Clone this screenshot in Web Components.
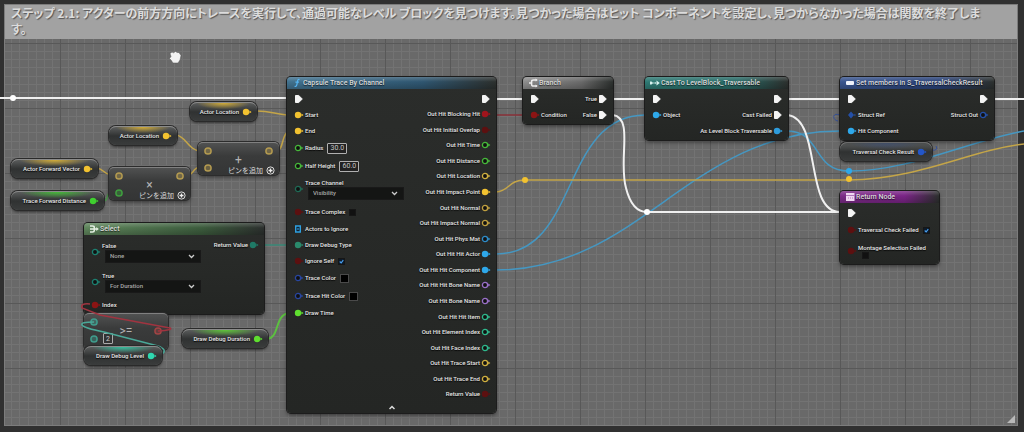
<!DOCTYPE html>
<html lang="ja">
<head>
<meta charset="utf-8">
<title>Traversal Blueprint</title>
<style>
  body { margin: 0; background: #2d2d2d; }
</style>
</head>
<body>
<graph-canvas>
  <comment-box>ステップ 2.1: アクターの前方方向にトレースを実行して、通過可能なレベル ブロックを見つけます。見つかった場合はヒット コンポーネントを設定し、見つからなかった場合は関数を終了します。</comment-box>
  <graph-wires></graph-wires>

  <var-node style="left:190px;top:102px;width:67px" label="Actor Location" color="#f2c230"></var-node>
  <var-node style="left:109px;top:126px;width:68px" label="Actor Location" color="#f2c230"></var-node>
  <var-node style="left:11px;top:159px;width:87px" label="Actor Forward Vector" color="#f2c230"></var-node>
  <var-node style="left:11px;top:191px;width:93px" label="Trace Forward Distance" color="#3fd02f"></var-node>

  <op-node style="left:198px;top:142px;width:81px;height:33px" sign="+" ins="#b39a50,#b39a50" out="#b39a50" addable></op-node>
  <op-node style="left:109px;top:167px;width:81px;height:33px" sign="×" ins="#b39a50,#3f9e3f" out="#b39a50" addable></op-node>

  <bp-node style="left:84px;top:223px;width:180px" heading="Select" icon="select" tint="#5f855c" tint2="#3c5c3d">
    <bp-pin slot="in" label="False" kind="ring" color="#1c7f70" control="select" value="None" roomy></bp-pin>
    <bp-pin slot="in" label="True" kind="ring" color="#1c7f70" control="select" value="For Duration" roomy></bp-pin>
    <bp-pin slot="in" label="Index" kind="dot" color="#8c1414"></bp-pin>
    <bp-pin slot="out" label="Return Value" kind="dot" color="#1f7a66"></bp-pin>
  </bp-node>
  <op-node style="left:84px;top:313px;width:84px;height:37px" sign="&gt;=" ins="#3f9c8c,#3f9c8c" out="#a04444" field="2"></op-node>
  <graph-wires layer="front"></graph-wires>
  <var-node style="left:84px;top:346px;width:78px" label="Draw Debug Level" color="#2fd8b0"></var-node>
  <var-node style="left:182px;top:329px;width:86px" label="Draw Debug Duration" color="#5fe02f"></var-node>

  <bp-node style="left:287px;top:77px;width:209px" heading="Capsule Trace By Channel" icon="func" tint="#42728f" tint2="#2f5670" collapsible>
    <bp-pin slot="in" kind="exec" color="#f4f4f4"></bp-pin>
    <bp-pin slot="in" label="Start" kind="dot" color="#f2c230"></bp-pin>
    <bp-pin slot="in" label="End" kind="dot" color="#f2c230"></bp-pin>
    <bp-pin slot="in" label="Radius" kind="ring" color="#46b83a" control="text" value="30.0"></bp-pin>
    <bp-pin slot="in" label="Half Height" kind="ring" color="#46b83a" control="text" value="60.0"></bp-pin>
    <bp-pin slot="in" label="Trace Channel" kind="ring" color="#1f6a55" control="select" value="Visibility"></bp-pin>
    <bp-pin slot="in" label="Trace Complex" kind="dot" color="#5c1010" control="check" tall></bp-pin>
    <bp-pin slot="in" label="Actors to Ignore" kind="array" color="#2ea0e0"></bp-pin>
    <bp-pin slot="in" label="Draw Debug Type" kind="dot" color="#2a8a6c"></bp-pin>
    <bp-pin slot="in" label="Ignore Self" kind="dot" color="#5c1010" control="check" value="on"></bp-pin>
    <bp-pin slot="in" label="Trace Color" kind="ring" color="#2846a0" control="color"></bp-pin>
    <bp-pin slot="in" label="Trace Hit Color" kind="ring" color="#2846a0" control="color"></bp-pin>
    <bp-pin slot="in" label="Draw Time" kind="dot" color="#5fe02f"></bp-pin>

    <bp-pin slot="out" kind="exec" color="#f4f4f4"></bp-pin>
    <bp-pin slot="out" label="Out Hit Blocking Hit" kind="dot" color="#a0141c"></bp-pin>
    <bp-pin slot="out" label="Out Hit Initial Overlap" kind="dot" color="#5c1010"></bp-pin>
    <bp-pin slot="out" label="Out Hit Time" kind="ring" color="#46b83a"></bp-pin>
    <bp-pin slot="out" label="Out Hit Distance" kind="ring" color="#46b83a"></bp-pin>
    <bp-pin slot="out" label="Out Hit Location" kind="ring" color="#d0b040"></bp-pin>
    <bp-pin slot="out" label="Out Hit Impact Point" kind="dot" color="#f2c230"></bp-pin>
    <bp-pin slot="out" label="Out Hit Normal" kind="ring" color="#c0a040"></bp-pin>
    <bp-pin slot="out" label="Out Hit Impact Normal" kind="ring" color="#c0a040"></bp-pin>
    <bp-pin slot="out" label="Out Hit Phys Mat" kind="ring" color="#2e8cc8"></bp-pin>
    <bp-pin slot="out" label="Out Hit Hit Actor" kind="dot" color="#2ea8ea"></bp-pin>
    <bp-pin slot="out" label="Out Hit Hit Component" kind="dot" color="#2ea8ea"></bp-pin>
    <bp-pin slot="out" label="Out Hit Hit Bone Name" kind="ring" color="#9a70c8"></bp-pin>
    <bp-pin slot="out" label="Out Hit Bone Name" kind="ring" color="#9a70c8"></bp-pin>
    <bp-pin slot="out" label="Out Hit Hit Item" kind="ring" color="#2fb88c"></bp-pin>
    <bp-pin slot="out" label="Out Hit Element Index" kind="ring" color="#2fb88c"></bp-pin>
    <bp-pin slot="out" label="Out Hit Face Index" kind="ring" color="#2fb88c"></bp-pin>
    <bp-pin slot="out" label="Out Hit Trace Start" kind="ring" color="#d0b040"></bp-pin>
    <bp-pin slot="out" label="Out Hit Trace End" kind="ring" color="#d0b040"></bp-pin>
    <bp-pin slot="out" label="Return Value" kind="dot" color="#5c1010"></bp-pin>
  </bp-node>

  <bp-node style="left:523px;top:77px;width:90px" heading="Branch" icon="branch" tint="#8e8e8e" tint2="#6a6a6a">
    <bp-pin slot="in" kind="exec" color="#f4f4f4"></bp-pin>
    <bp-pin slot="in" label="Condition" kind="dot" color="#8c1414"></bp-pin>
    <bp-pin slot="out" label="True" kind="exec" color="#f4f4f4"></bp-pin>
    <bp-pin slot="out" label="False" kind="exec" color="#f4f4f4"></bp-pin>
  </bp-node>

  <bp-node style="left:645px;top:77px;width:143px" heading="Cast To LevelBlock_Traversable" icon="cast" tint="#2f7a74" tint2="#286a66">
    <bp-pin slot="in" kind="exec" color="#f4f4f4"></bp-pin>
    <bp-pin slot="in" label="Object" kind="dot" color="#2ea8ea"></bp-pin>
    <bp-pin slot="out" kind="exec" color="#f4f4f4"></bp-pin>
    <bp-pin slot="out" label="Cast Failed" kind="exec" color="#f4f4f4"></bp-pin>
    <bp-pin slot="out" label="As Level Block Traversable" kind="dot" color="#2e9cdc"></bp-pin>
  </bp-node>

  <var-node style="left:840px;top:142px;width:92px" label="Traversal Check Result" color="#2456c8" plain></var-node>
  <bp-node style="left:840px;top:77px;width:154px" heading="Set members in S_TraversalCheckResult" icon="struct" tint="#3a568f" tint2="#2a4278">
    <bp-pin slot="in" kind="exec" color="#f4f4f4"></bp-pin>
    <bp-pin slot="in" label="Struct Ref" kind="diamond" color="#2450a8"></bp-pin>
    <bp-pin slot="in" label="Hit Component" kind="dot" color="#2ea8ea"></bp-pin>
    <bp-pin slot="out" kind="exec" color="#f4f4f4"></bp-pin>
    <bp-pin slot="out" label="Struct Out" kind="ring" color="#2450a8"></bp-pin>
  </bp-node>

  <bp-node style="left:840px;top:191px;width:99px" heading="Return Node" icon="return" tint="#7c2c88" tint2="#7a2486">
    <bp-pin slot="in" kind="exec" color="#f4f4f4"></bp-pin>
    <bp-pin slot="in" label="Traversal Check Failed" kind="dot" color="#5c1010" control="check" value="on" tall></bp-pin>
    <bp-pin slot="in" label="Montage Selection Failed" kind="dot" color="#5c1010" control="check" stacked></bp-pin>
  </bp-node>
  <hand-cursor style="left:168px;top:50px"></hand-cursor>
</graph-canvas>

<script>
const attach = (el, html) => { el.attachShadow({ mode: 'open' }).innerHTML = html; };

/* Glyph of one pin: exec arrow, filled or hollow dot, array grid, struct diamond. */
function pinGlyph(kind, c) {
  const shapes = {
    exec: `<path d="M1.5 1.5h3.2l3.6 3.5-3.6 3.5H1.5z" fill="${c}" stroke="${c}" stroke-linejoin="round"/>`,
    dot: `<circle cx="4" cy="5" r="3.2" fill="${c}"/><path d="M7.4 3.4 9.6 5 7.4 6.6z" fill="${c}"/>`,
    ring: `<circle cx="4" cy="5" r="2.6" fill="#111" stroke="${c}" stroke-width="1.3"/><path d="M7.2 3.4 9.4 5 7.2 6.6z" fill="${c}"/>`,
    array: `<path d="M1.700 2h4.600v6H1.700z" fill="#123" stroke="${c}" stroke-width="1.400"/><path d="M3.300 4.200h1.400v1.600H3.300z" fill="${c}"/>`,
    diamond: `<path d="M4 1.6 7 5 4 8.4 1 5z" fill="${c}"/><path d="M7.4 3.8 9 5 7.4 6.2z" fill="${c}"/>`
  };
  return `<svg width="10" height="10" viewBox="0 0 10 10" aria-hidden="true">${shapes[kind]}</svg>`;
}

const HEAD_ICONS = {
  func: '<path d="M7.5 1.6C5.6 1 5.6 2.6 5.2 5S4.600 8.800 2.600 8.300M3.400 4.200h3.500" fill="none" stroke="#55b4f0" stroke-width="1.200"/>',
  branch: '<path d="M1 5h2.500M8.500 2H5.500Q3.600 2 3.600 3.600v2.800Q3.600 8 5.500 8h3" fill="none" stroke="#eee" stroke-width="1.500"/><path d="M7.600.6 9.800 2 7.600 3.400zM7.600 6.600 9.800 8 7.600 9.400z" fill="#eee"/>',
  select: '<path d="M1 2h2.500q1.800 0 1.800 1.500v3Q5.300 8 3.500 8H1M1 5h7" fill="none" stroke="#e4efe2" stroke-width="1.600"/><path d="M7.300 3 9.800 5 7.300 7z" fill="#e4efe2"/>',
  cast: '<path d="M0 3.500h1.500L3.200 5 1.500 6.500H0zM6.500 2.600 9.800 5 6.500 7.400z" fill="#d8f2ef"/><path d="M3.500 5h3" stroke="#d8f2ef" stroke-width="1.500" stroke-dasharray="1 .6"/>',
  struct: '<rect x="1" y="3" width="8" height="4" rx="1" fill="#eef2fa"/>',
  return: '<rect x="1" y="1" width="8.500" height="8" fill="#f0d8f2"/><path d="M1 3.500h8.500M3 6h1M5 6h1M7 6h1" stroke="#a060a8" stroke-width=".8"/>'
};

customElements.define('graph-canvas', class extends HTMLElement {
  constructor() {
    super();
    attach(this, `<style>
      :host { display: block; position: relative; box-sizing: border-box; min-height: 100vh; padding: 4px 6px 6px 4px;
        overflow: hidden; font: 500 6px/8px Roboto, "Noto Sans CJK JP", sans-serif; color: #e6e6e6; background: #303030; }
      ::slotted(comment-box) { min-height: calc(100vh - 10px); }
    </style>
    <slot></slot>`);
  }
});

customElements.define('comment-box', class extends HTMLElement {
  constructor() {
    super();
    attach(this, `<style>
      :host { display: block; position: relative; box-sizing: border-box; background: #696969; border: 1px solid #7c7c7c; }
      h1 { position: relative; margin: 0; padding: 0 31px 2px 6px; background: #a2a2a2; color: #dcdcdc;
        font: 700 12px/16px "Noto Sans CJK JP", sans-serif; font-feature-settings: "palt"; text-shadow: 1px 1px 1px #555; }
      svg { position: absolute; inset: 0; width: 100%; height: 100%; }
      .grip { inset: auto 2px 2px auto; width: 8px; height: 8px; }
    </style>
    <svg aria-hidden="true"><defs><pattern id="g" x="55" y="38" width="65" height="65" patternUnits="userSpaceOnUse">
      <path d="M8 0V65M16 0V65M24 0V65M33 0V65M41 0V65M49 0V65M57 0V65M0 8H65M0 16H65M0 24H65M0 33H65M0 41H65M0 49H65M0 57H65" transform="translate(.5 .5)" stroke="#737373"/>
      <path d="M.5 0V65M0 .5H65" stroke="#585858"/></pattern></defs><rect width="100%" height="100%" fill="url(#g)"/></svg>
    <h1><slot></slot></h1>
    <svg class="grip" viewBox="0 0 8 8" aria-hidden="true"><path d="M8 0V8H0z" fill="#b8b8b8"/></svg>`);
  }
});

customElements.define('graph-wires', class extends HTMLElement {
  constructor() {
    super();
    const w = (d, c, n = 1.500) => `<path d="${d}" stroke="${c}" stroke-width="${n}"/>`;
    const k = (x, y, c, r = 3) => `<circle cx="${x}" cy="${y}" r="${r}" fill="${c}"/>`;
    const Y = '#c4a548', B = '#4597c2', W = '#f0f0f0';
    const back =
      w('M496 254C580 254 560 116 645 115', B) + w('M496 270C640 270 690 131 840 131', B) +
      w('M788 131C822 132 812 171 849 171C910 171 965 142 1024 131', B) +
      w('M496 192C510 191 508 180 525 180H849C920 179 970 150 1024 144', Y) +
      w('M257 111C270 111 275 114 287 115', Y) + w('M176 135C186 136 188 150 200 151', Y) +
      w('M97 168C104 169 103 174 111 175', Y) + w('M188 175C194 175 192 168 200 167', Y) +
      w('M277 151C284 150 281 134 289 131', Y) + w('M104 201C109 200 106 192 112 191', '#4a9a4a') +
      w('M267 339C280 338 274 315 289 313', '#5cc040', 2) + w('M264 245H287', '#3a8a78') +
      w('M496 115H523', '#8a3038') + w('M840 115C832 112 832 120 838 121M931 150Q939 151 936 146', '#34509c', 1) +
      w('M0 98H287M496 99H523M613 99H645M788 99H840M994 99H1024', W, 2) +
      w('M613 115C634 118 618 160 626 188Q632 212 647 212H840', W, 2) +
      w('M788 115C822 120 804 212 840 212', W, 2) +
      k(13, 98, '#fff') + k(525, 180, '#f2c230') + k(849, 179, '#f2c230') + k(849, 171, '#2ea8ea') + k(647, 212, '#fff');
    const front =
      w('M90 304Q80 303 82 308L100 315L170 328Q174 330 158 331', '#a03440') +
      w('M94 322Q80 322 82 325Q84 328 104 332L158 346Q168 350 162 354', '#4aa898');
    attach(this, `<style>
      :host { display: block; position: absolute; inset: 0; pointer-events: none; }
      svg { width: 100%; height: 100%; }
    </style><svg fill="none" aria-hidden="true">${this.getAttribute('layer') ? front : back}</svg>`);
  }
});

customElements.define('bp-node', class extends HTMLElement {
  constructor() {
    super();
    const a = n => this.getAttribute(n), long = a('collapsible') !== null;
    attach(this, `<style>
      :host { display: block; position: absolute; box-sizing: border-box; border-radius: 4px; overflow: hidden; ${long ? '--out-row: 15px;' : ''}
        background: linear-gradient(#2b2d2b, #242624); box-shadow: 0 0 0 1px #1c1c1c, 0 2px 4px #0008; }
      header { display: flex; align-items: center; gap: 1px; height: 12px; padding: 0 5px; white-space: nowrap;
        background: linear-gradient(#fff3, #fff0 40%, #0003), linear-gradient(90deg, ${a('tint')}, ${a('tint2')} 65%, #2c302e); }
      h2 { margin: 0; font: 500 7px/8px Roboto, sans-serif; color: #dadada; text-shadow: 0 1px 1px #000a; }
      .body { display: flex; justify-content: space-between; padding: 2px 0 1px; }
      .col { display: flex; flex-direction: column; }
      .out { justify-content: ${long ? 'space-between' : 'flex-start'}; }
      .long { min-height: 313px; padding-bottom: 0; box-sizing: border-box; }
      button { display: flex; justify-content: center; width: 100%; height: 11px; padding: 3px 0; border: 0; background: none; }
    </style>
    <header><svg width="10" height="10" viewBox="0 0 10 10" aria-hidden="true">${HEAD_ICONS[a('icon')]}</svg><h2>${a('heading')}</h2></header>
    <div class="body ${long ? 'long' : ''}"><div class="col"><slot name="in"></slot></div><div class="col out"><slot name="out"></slot></div></div>
    ${long ? '<button aria-label="Collapse"><svg width="6" height="5" viewBox="0 0 6 5"><path d="M.5 4 3 1.500 5.500 4" fill="none" stroke="#ddd" stroke-width="1.500"/></svg></button>' : ''}`);
  }
});

customElements.define('bp-pin', class extends HTMLElement {
  constructor() {
    super();
    const a = n => this.getAttribute(n), out = a('slot') === 'out', c = a('control'), v = a('value') || '';
    const field = {
      text: `<input id="f" type="text" value="${v}">`,
      check: `<input id="f" type="checkbox" ${v ? 'checked' : ''}>`,
      color: '<input id="f" type="color" value="#000000">',
      select: `<span class="pick"><select id="f"><option>${v}</option></select><svg width="7" height="5" viewBox="0 0 7 5" aria-hidden="true"><path d="M1 1 3.500 3.500 6 1" fill="none" stroke="#ccc" stroke-width="1.300"/></svg></span>`
    }[c] || '';
    const big = c === 'select', stacked = a('stacked') !== null;
    const h = big ? (a('roomy') !== null ? '30px' : '28px') : stacked ? '24px'
      : (c === 'text' || c === 'color' || a('tall') !== null) ? '18px' : out ? 'var(--out-row, 16px)' : '16px';
    const tag = c ? 'label for="f"' : 'span', end = c ? 'label' : 'span';
    attach(this, `<style>
      :host { display: flex; align-items: center; gap: 1px; height: ${h}; white-space: nowrap;
        ${out ? 'flex-direction: row-reverse; padding-right: 5px;' : 'padding-left: 7px;'} }
      :host > svg { flex: none; }
      .main { display: flex; align-items: ${big || stacked ? 'flex-start' : 'center'}; gap: ${big ? 0 : 4}px; ${big || stacked ? 'flex-direction: column;' : ''} }
      ${stacked ? '.main { gap: 0; } .main input { margin-left: 4px; }' : ''}
      label, span { text-shadow: 0 1px 1px #000; }
      input, select { box-sizing: border-box; margin: 0; font: inherit; color: #c4c4c4; appearance: none; border-radius: 0; }
      input[type=text] { width: 20px; height: 11px; padding: 0 1px; border: 1px solid #b0b0b0; border-radius: 1px; background: #222; text-align: center; font: 400 7px/8px Roboto, sans-serif; }
      input[type=checkbox] { width: 7px; height: 7px; background: #111; border: 1px solid #161616; }
      input[type=checkbox]:checked { background: #0c1a2a url('data:image/svg+xml,<svg xmlns="http://www.w3.org/2000/svg" viewBox="0 0 7 7"><path d="M1 3.500 3 5.500 6 1.500" fill="none" stroke="%234aa0f0" stroke-width="1.500"/></svg>'); }
      input[type=color] { width: 9px; height: 9px; padding: 0; border: 1px solid #4a4a4a; background: #050505; }
      input[type=color]::-webkit-color-swatch-wrapper { padding: 0; }
      input[type=color]::-webkit-color-swatch { border: 0; }
      .pick { position: relative; display: flex; align-items: center; margin-left: 3px; }
      .pick svg { position: absolute; right: 6px; pointer-events: none; }
      select { width: 96px; height: 13px; padding: 0 4px; border: 1px solid #191919; background: #141514; color: #a8a8a8; }
    </style>
    ${pinGlyph(a('kind'), a('color'))}
    <div class="main">${a('label') ? `<${tag}>${a('label')}</${end}>` : ''}${field}</div>`);
  }
});

customElements.define('var-node', class extends HTMLElement {
  constructor() {
    super();
    const a = n => this.getAttribute(n), c = a('color');
    attach(this, `<style>
      :host { display: flex; align-items: center; justify-content: flex-end; gap: 3px; position: absolute; box-sizing: border-box; height: 19px;
        padding-right: 5px; white-space: nowrap; border-radius: 7px; border-top: 1px solid #8a8a8a; box-shadow: 0 0 0 1px #2a2a2a, 0 2px 3px #0008;
        background: radial-gradient(ellipse 40% 35% at 50% 0, ${c}${a('plain') !== null ? '44' : 'cc'}, transparent), linear-gradient(#5a5c5c, #303232 50%, #3a3c3c); }
      span { text-shadow: 0 1px 1px #000; }
      svg { flex: none; }
    </style><span>${a('label')}</span>${pinGlyph('dot', c)}`);
  }
});

customElements.define('op-node', class extends HTMLElement {
  constructor() {
    super();
    const a = n => this.getAttribute(n);
    const dot = c => `<svg width="10" height="10" viewBox="0 0 10 10" aria-hidden="true"><circle cx="5" cy="5" r="3.100" fill="${c}66" stroke="${c}" stroke-width="1.500"/></svg>`;
    const ins = a('ins').split(',');
    attach(this, `<style>
      :host { display: grid; grid-template-columns: 1fr 12px 1fr; position: absolute; box-sizing: border-box; padding: ${a('field') ? '3px 5px 6px' : '3px 5px 2px'};
        border-radius: 5px; border-top: 1px solid #808080; background: linear-gradient(#505151, #3a3b3b 40%, #343535); box-shadow: 0 0 0 1px #2c2c2c, 0 2px 4px #0008; }
      .ins { display: flex; flex-direction: column; justify-content: space-between; }
      .row { display: flex; align-items: center; gap: 4px; }
      input { box-sizing: border-box; width: 10px; height: 11px; margin: 0; padding: 0 2px; border: 1px solid #aaa; border-radius: 1px; background: #333; color: #ccc; font: 400 7px/8px Roboto, sans-serif; }
      b { align-self: center; justify-self: center; white-space: nowrap; font: 400 12px/12px Roboto, sans-serif; color: #b4b4b4; }
      .out { display: flex; justify-content: flex-end; align-items: ${a('field') ? 'center' : 'flex-start'}; }
      button { position: absolute; right: 4px; bottom: 0; display: flex; align-items: center; gap: 3px; padding: 0; border: 0; background: none;
        color: #d8d8d8; font: 400 7px/10px "Noto Sans CJK JP", sans-serif; }
    </style>
    <div class="ins">${ins.map((c, i) => `<div class="row">${dot(c)}${i && a('field') ? `<input aria-label="B" value="${a('field')}">` : ''}</div>`).join('')}</div>
    <b>${a('sign')}</b><div class="out">${dot(a('out'))}</div>
    ${a('addable') !== null ? '<button>ピンを追加<svg width="9" height="9" viewBox="0 0 9 9" aria-hidden="true"><circle cx="4.500" cy="4.500" r="3.600" fill="none" stroke="#ddd"/><path d="M4.500 2.500v4M2.500 4.500h4" stroke="#eee" stroke-width="1.300"/></svg></button>' : ''}`);
  }
});

customElements.define('hand-cursor', class extends HTMLElement {
  constructor() {
    super();
    attach(this, `<style>:host { display: block; position: absolute; }</style>
    <svg width="14" height="14" viewBox="0 0 14 14" aria-hidden="true"><path d="M2 3.500 4 2l1.500.8L7.500 1.500l1.700 1L11 2.500l1 1.500 1 1.500-1 4.500-2 3H5L3 10 1.500 8.500 3 6.500z" fill="#f2f2f2" stroke="#555" stroke-width=".5"/></svg>`);
  }
});
</script>
</body>
</html>
